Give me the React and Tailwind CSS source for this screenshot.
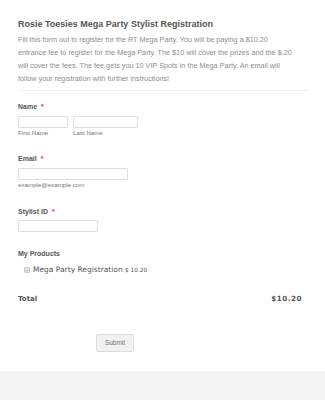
export default function App() {
  const sans = { fontFamily: '"Liberation Sans", Arial, sans-serif' };
  const dv = { fontFamily: '"DejaVu Sans", Verdana, sans-serif' };
  return (
    <div className="w-[325px] h-[400px] bg-white flex flex-col overflow-hidden" style={sans}>
      <div className="px-[18px] pt-[18px] flex-1">
        <div className="text-[9px] leading-[12px] font-bold text-[#555]">
          Rosie Toesies Mega Party Stylist Registration
        </div>
        <p className="mt-[3px] text-[7.25px] leading-[13px] text-[#8d8d8d]">
          Fill this form out to register for the RT Mega Party. You will be paying a $10.20<br />
          entrance fee to register for the Mega Party. The $10 will cover the prizes and the $.20<br />
          will cover the fees. The fee gets you 10 VIP Spots in the Mega Party. An email will<br />
          follow your registration with further instructions!
        </p>
        <div className="mt-[5px] border-t border-[#eee] w-[290px]" />

        <div className="mt-[11px] text-[7px] leading-[10px] font-bold text-[#555]">
          Name <span className="text-[#e33] ml-[2px]">*</span>
        </div>
        <div className="mt-[4px] flex gap-[5px]">
          <div>
            <div className="w-[50px] h-[12px] border border-[#ddd] rounded-[1px]" />
            <div className="mt-[1px] text-[6.2px] leading-[7px] text-[#777]">First Name</div>
          </div>
          <div>
            <div className="w-[65px] h-[12px] border border-[#ddd] rounded-[1px]" />
            <div className="mt-[1px] text-[6.2px] leading-[7px] text-[#777]">Last Name</div>
          </div>
        </div>

        <div className="mt-[18px] text-[7px] leading-[10px] font-bold text-[#555]">
          Email <span className="text-[#e33] ml-[2px]">*</span>
        </div>
        <div className="mt-[4px]">
          <div className="w-[110px] h-[12px] border border-[#ddd] rounded-[1px]" />
          <div className="mt-[1px] text-[6.2px] leading-[7px] text-[#777]">example@example.com</div>
        </div>

        <div className="mt-[19px] text-[7px] leading-[10px] font-bold text-[#555]">
          Stylist ID <span className="text-[#e33] ml-[2px]">*</span>
        </div>
        <div className="mt-[3px] w-[80px] h-[12px] border border-[#ddd] rounded-[1px]" />

        <div className="mt-[17px] text-[7px] leading-[10px] font-bold text-[#555]">My Products</div>
        <div className="mt-[6px] ml-[6px] flex items-center gap-[3px]">
          <div className="w-[6px] h-[6px] bg-[#e6e6e6] border border-[#ccc] rounded-[1px] flex items-center justify-center">
            <svg viewBox="0 0 10 10" className="w-[5px] h-[5px]"><path d="M2 5l2 2 4-4" stroke="#888" strokeWidth="1.5" fill="none" /></svg>
          </div>
          <span className="text-[7.5px] leading-[10px] text-[#555]" style={dv}>
            Mega Party Registration <span className="text-[5.8px]">$ 10.20</span>
          </span>
        </div>

        <div className="mt-[19px] flex justify-between items-center pr-[5px]">
          <span className="text-[7px] leading-[10px] font-bold text-[#555]" style={dv}>Total</span>
          <span className="text-[7.2px] leading-[10px] font-bold text-[#555] tracking-[0.5px]" style={dv}>$10.20</span>
        </div>

        <div className="mt-[24px] ml-[78px]">
          <button className="w-[38px] h-[18px] bg-[#f1f1f1] border border-[#ddd] rounded-[2px] text-[6.5px] text-[#777]">
            Submit
          </button>
        </div>
      </div>
      <div className="h-[29px] bg-[#f4f4f4]" />
    </div>
  );
}
